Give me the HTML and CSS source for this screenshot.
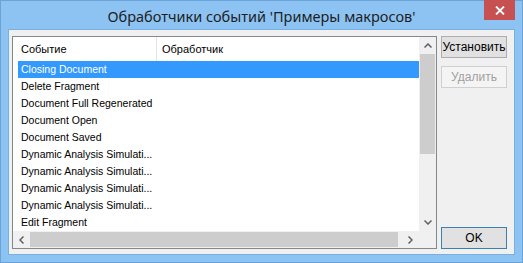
FILE: index.html
```html
<!DOCTYPE html>
<html lang="ru">
<head>
<meta charset="utf-8">
<title>Обработчики событий</title>
<link rel="stylesheet" href="styles.css">
</head>
<body>
<div class="window">
  <div class="titlebar">
    <div class="title">Обработчики событий 'Примеры макросов'</div>
    <div class="close"><svg width="10" height="9" viewBox="0 0 10 9"><path d="M1 0.5 L9 8.5 M9 0.5 L1 8.5" stroke="#fff" stroke-width="1.8"/></svg></div>
  </div>
  <div class="client">
    <div class="listbox">
      <div class="content">
        <div class="header">
          <div class="hcol first">Событие</div>
          <div class="hcol">Обработчик</div>
        </div>
        <div class="rows">
          <div class="row selected">Closing Document</div>
          <div class="row">Delete Fragment</div>
          <div class="row">Document Full Regenerated</div>
          <div class="row">Document Open</div>
          <div class="row">Document Saved</div>
          <div class="row">Dynamic Analysis Simulati...</div>
          <div class="row">Dynamic Analysis Simulati...</div>
          <div class="row">Dynamic Analysis Simulati...</div>
          <div class="row">Dynamic Analysis Simulati...</div>
          <div class="row">Edit Fragment</div>
        </div>
      </div>
      <div class="vscroll">
        <div class="arrow"><svg width="8" height="5" viewBox="0 0 8 5"><path d="M0.5 4.5 L4 1 L7.5 4.5" fill="none" stroke="#606060" stroke-width="1.5"/></svg></div>
        <div class="vthumb"></div>
        <div class="vtrack"></div>
        <div class="arrow"><svg width="8" height="5" viewBox="0 0 8 5"><path d="M0.5 0.5 L4 4 L7.5 0.5" fill="none" stroke="#606060" stroke-width="1.5"/></svg></div>
      </div>
      <div class="hscroll">
        <div class="arrow"><svg width="5" height="8" viewBox="0 0 5 8"><path d="M4.5 0.5 L1 4 L4.5 7.5" fill="none" stroke="#606060" stroke-width="1.5"/></svg></div>
        <div class="hthumb"></div>
        <div class="arrow"><svg width="5" height="8" viewBox="0 0 5 8"><path d="M0.5 0.5 L4 4 L0.5 7.5" fill="none" stroke="#606060" stroke-width="1.5"/></svg></div>
      </div>
      <div class="corner"></div>
    </div>
    <div class="buttons">
      <div class="btn">Установить</div>
      <div class="btn disabled">Удалить</div>
      <div class="spacer"></div>
      <div class="btn default">OK</div>
    </div>
  </div>
</div>
</body>
</html>
```
FILE: styles.css
```css
* { box-sizing: border-box; }
html, body { margin: 0; padding: 0; }
body { width: 523px; height: 263px; overflow: hidden; background: #8cc3f2; }

.window {
  width: 523px;
  height: 263px;
  background: #8cc3f2;
  border: 1px solid #6aa3d8;
  display: flex;
  flex-direction: column;
  padding: 0 7px 7px 7px;
}

.titlebar {
  height: 29px;
  display: grid;
  grid-template-columns: 1fr auto 1fr;
  align-items: start;
}
.title {
  grid-column: 2;
  font-family: "Noto Sans", sans-serif;
  font-size: 14.5px;
  color: #1e1e1e;
  line-height: 20px;
  padding-top: 5px;
  white-space: nowrap;
}
.close {
  grid-column: 3;
  justify-self: end;
  width: 31px;
  height: 20px;
  margin-top: -1px;
  background: #c75050;
  display: flex;
  align-items: center;
  justify-content: center;
}

.client {
  flex: 1;
  background: #f0f0f0;
  border: 1px solid #7ab0e0;
  display: flex;
  gap: 4px;
  padding: 6px 7px 5px 3px;
  font-family: "Liberation Sans", Arial, sans-serif;
  font-size: 12px;
}

.listbox {
  width: 425px;
  border: 1px solid #828790;
  background: #fff;
  display: grid;
  grid-template-columns: 1fr 17px;
  grid-template-rows: 1fr 17px;
  font-size: 10.5px;
}

.content { overflow: hidden; }
.header {
  height: 24px;
  display: flex;
  align-items: center;
  color: #000;
  font-size: 11px;
}
.hcol { padding-left: 5px; height: 100%; display: flex; align-items: center; }
.hcol.first { width: 144px; padding-left: 8px; border-right: 1px solid #e5e5e5; }

.row {
  height: 17px;
  line-height: 17px;
  margin-left: 5px;
  padding-left: 3px;
  color: #000;
  white-space: nowrap;
}
.row.selected { background: #3399ff; color: #fff; }

.vscroll {
  background: #f0f0f0;
  display: flex;
  flex-direction: column;
}
.arrow {
  width: 17px;
  height: 17px;
  flex: none;
  display: flex;
  align-items: center;
  justify-content: center;
}
.vthumb { height: 100px; margin: 0 1px; background: #cdcdcd; flex: none; }
.vtrack { flex: 1; }

.hscroll {
  background: #f0f0f0;
  display: flex;
}
.hthumb { flex: 1; margin: 1px 0; margin-right: 4px; background: #cdcdcd; }
.corner { background: #f0f0f0; }

.buttons {
  width: 66px;
  display: flex;
  flex-direction: column;
  gap: 8px;
}
.btn {
  height: 22px;
  border: 1px solid #adadad;
  background: #e1e1e1;
  color: #000;
  display: flex;
  align-items: center;
  justify-content: center;
  white-space: nowrap;
}
.btn.disabled { background: #f4f4f4; border-color: #d0d0d0; color: #a0a0a0; }
.btn.default { border-color: #3c7fb1; }
.spacer { flex: 1; }
```
